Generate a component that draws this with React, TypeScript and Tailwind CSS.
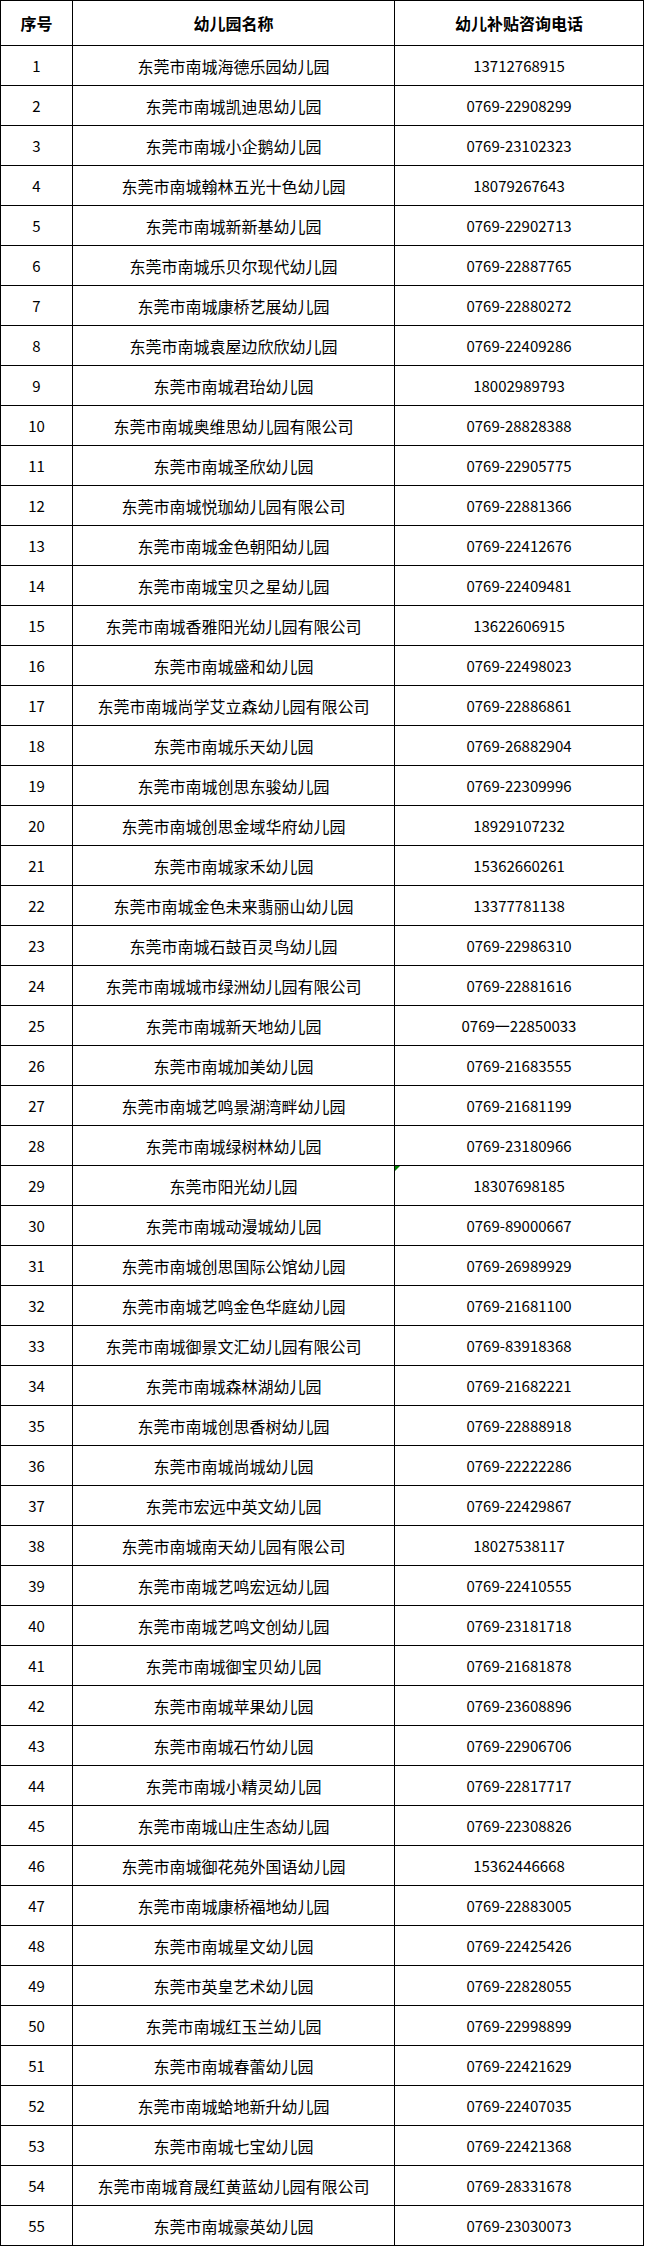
const rows: [string, string][] = [
  ["东莞市南城海德乐园幼儿园", "13712768915"],
  ["东莞市南城凯迪思幼儿园", "0769-22908299"],
  ["东莞市南城小企鹅幼儿园", "0769-23102323"],
  ["东莞市南城翰林五光十色幼儿园", "18079267643"],
  ["东莞市南城新新基幼儿园", "0769-22902713"],
  ["东莞市南城乐贝尔现代幼儿园", "0769-22887765"],
  ["东莞市南城康桥艺展幼儿园", "0769-22880272"],
  ["东莞市南城袁屋边欣欣幼儿园", "0769-22409286"],
  ["东莞市南城君珆幼儿园", "18002989793"],
  ["东莞市南城奥维思幼儿园有限公司", "0769-28828388"],
  ["东莞市南城圣欣幼儿园", "0769-22905775"],
  ["东莞市南城悦珈幼儿园有限公司", "0769-22881366"],
  ["东莞市南城金色朝阳幼儿园", "0769-22412676"],
  ["东莞市南城宝贝之星幼儿园", "0769-22409481"],
  ["东莞市南城香雅阳光幼儿园有限公司", "13622606915"],
  ["东莞市南城盛和幼儿园", "0769-22498023"],
  ["东莞市南城尚学艾立森幼儿园有限公司", "0769-22886861"],
  ["东莞市南城乐天幼儿园", "0769-26882904"],
  ["东莞市南城创思东骏幼儿园", "0769-22309996"],
  ["东莞市南城创思金域华府幼儿园", "18929107232"],
  ["东莞市南城家禾幼儿园", "15362660261"],
  ["东莞市南城金色未来翡丽山幼儿园", "13377781138"],
  ["东莞市南城石鼓百灵鸟幼儿园", "0769-22986310"],
  ["东莞市南城城市绿洲幼儿园有限公司", "0769-22881616"],
  ["东莞市南城新天地幼儿园", "0769一22850033"],
  ["东莞市南城加美幼儿园", "0769-21683555"],
  ["东莞市南城艺鸣景湖湾畔幼儿园", "0769-21681199"],
  ["东莞市南城绿树林幼儿园", "0769-23180966"],
  ["东莞市阳光幼儿园", "18307698185"],
  ["东莞市南城动漫城幼儿园", "0769-89000667"],
  ["东莞市南城创思国际公馆幼儿园", "0769-26989929"],
  ["东莞市南城艺鸣金色华庭幼儿园", "0769-21681100"],
  ["东莞市南城御景文汇幼儿园有限公司", "0769-83918368"],
  ["东莞市南城森林湖幼儿园", "0769-21682221"],
  ["东莞市南城创思香树幼儿园", "0769-22888918"],
  ["东莞市南城尚城幼儿园", "0769-22222286"],
  ["东莞市宏远中英文幼儿园", "0769-22429867"],
  ["东莞市南城南天幼儿园有限公司", "18027538117"],
  ["东莞市南城艺鸣宏远幼儿园", "0769-22410555"],
  ["东莞市南城艺鸣文创幼儿园", "0769-23181718"],
  ["东莞市南城御宝贝幼儿园", "0769-21681878"],
  ["东莞市南城苹果幼儿园", "0769-23608896"],
  ["东莞市南城石竹幼儿园", "0769-22906706"],
  ["东莞市南城小精灵幼儿园", "0769-22817717"],
  ["东莞市南城山庄生态幼儿园", "0769-22308826"],
  ["东莞市南城御花苑外国语幼儿园", "15362446668"],
  ["东莞市南城康桥福地幼儿园", "0769-22883005"],
  ["东莞市南城星文幼儿园", "0769-22425426"],
  ["东莞市英皇艺术幼儿园", "0769-22828055"],
  ["东莞市南城红玉兰幼儿园", "0769-22998899"],
  ["东莞市南城春蕾幼儿园", "0769-22421629"],
  ["东莞市南城蛤地新升幼儿园", "0769-22407035"],
  ["东莞市南城七宝幼儿园", "0769-22421368"],
  ["东莞市南城育晟红黄蓝幼儿园有限公司", "0769-28331678"],
  ["东莞市南城豪英幼儿园", "0769-23030073"],
];

const cell = "flex items-center justify-center border-r border-b border-black";

export default function App() {
  return (
    <div className="bg-white w-[645px] text-black font-['Noto_Sans_CJK_SC',sans-serif] text-[16px] leading-none">
      <div className="grid grid-cols-[72px_322px_249px] border-l border-t border-black w-[644px]">
        {/* header */}
        <div className={`${cell} h-[45px] font-bold`}>序号</div>
        <div className={`${cell} h-[45px] font-bold`}>幼儿园名称</div>
        <div className={`${cell} h-[45px] font-bold`}>幼儿补贴咨询电话</div>

        {rows.map(([name, phone], i) => (
          <div key={i} className="contents">
            <div className={`${cell} h-[40px] text-[15px]`}>{i + 1}</div>
            <div className={`${cell} h-[40px]`}>{name}</div>
            <div className={`${cell} h-[40px] text-[15px] relative`}>
              {i === 28 && (
                <span className="absolute left-0 top-0 w-0 h-0 border-t-[5px] border-r-[5px] border-t-[#008000] border-r-transparent" />
              )}
              {phone}
            </div>
          </div>
        ))}
      </div>
    </div>
  );
}
